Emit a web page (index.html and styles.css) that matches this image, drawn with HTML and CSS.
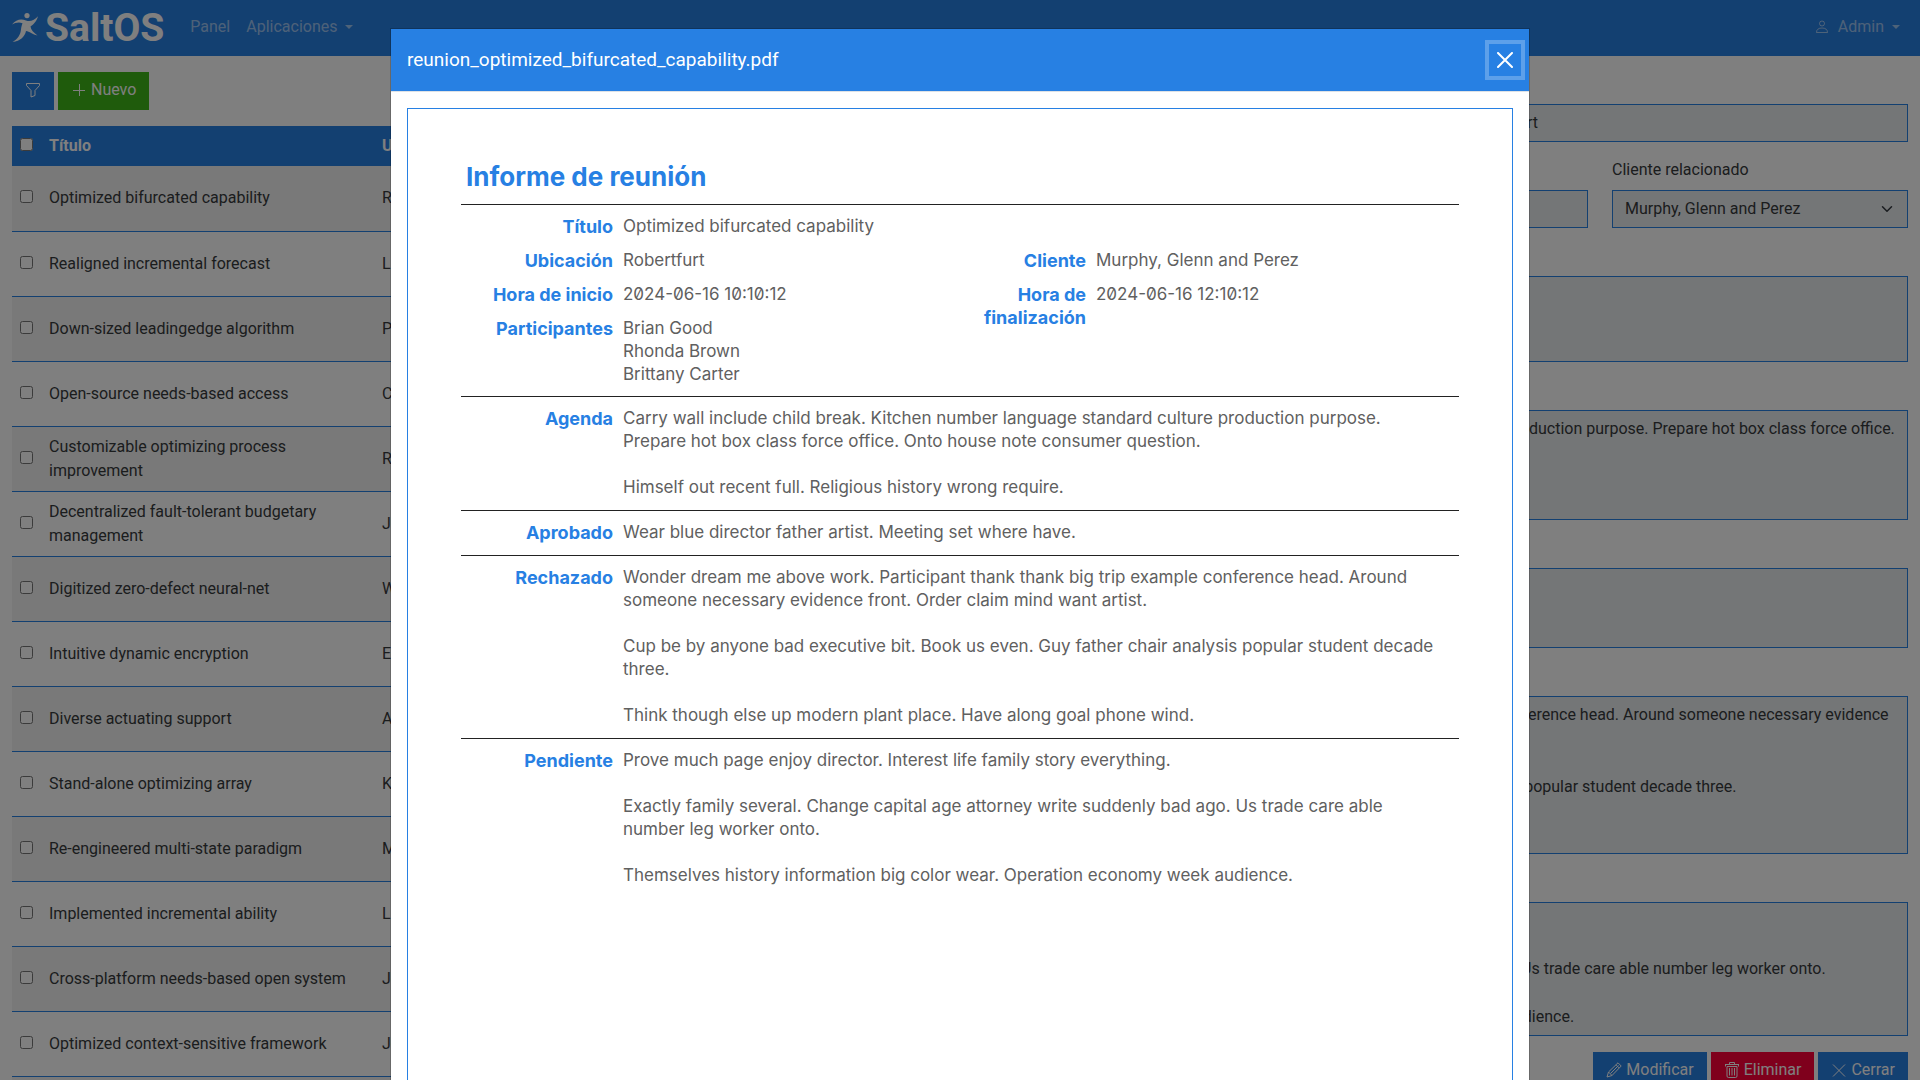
FILE: index.html
```html
<!DOCTYPE html>
<html lang="es">
<head>
<meta charset="utf-8">
<title>SaltOS</title>
<meta name="viewport" content="width=device-width, initial-scale=1">
<link rel="stylesheet" href="styles.css">
</head>
<body>
<header class="navbar">
  <a class="brand" href="#" aria-label="SaltOS">
    <svg class="brand-mark" viewBox="0 0 27 30" aria-hidden="true"><circle cx="15" cy="2.600" r="2.600"/><path d="M0 11.500C4 6.500 9 5.500 14 7.500C18.500 9 22.500 7 26 3.200C24.500 9 21 11.500 18.500 13.500C19 17 21.500 19.500 25.500 22.500C20.500 21.500 17.500 18.200 14 18C13 23 8.500 28.500 .5 29C6 26 8.500 21.500 9 16.500C9.200 14 9.800 12 10.500 10.200C6.500 8.800 3 10 0 11.500Z"/></svg>
    <span class="brand-name">SaltOS</span>
  </a>
  <nav class="nav">
    <a class="nav-link" href="#">Panel</a>
    <a class="nav-link" href="#">Aplicaciones <span class="caret"></span></a>
  </nav>
  <a class="nav-link nav-user" href="#"><svg class="icon" viewBox="0 0 16 16" aria-hidden="true"><circle cx="8" cy="4.500" r="2.500"/><path d="M2.500 13.500c0-3 2-4.500 5.500-4.500s5.500 1.500 5.500 4.500z"/></svg><span class="nav-user-name">Admin</span> <span class="caret"></span></a>
</header>

<main class="content">
  <section class="list">
    <div class="toolbar">
      <button class="btn btn-primary" type="button" aria-label="Filtrar"><svg class="icon" viewBox="0 0 16 16" aria-hidden="true"><path d="M1.500 1.500h13v2l-4.500 5v5l-4 1.500v-6.500l-4.500-5z"/></svg></button>
      <button class="btn btn-success" type="button"><svg class="icon" viewBox="0 0 16 16" aria-hidden="true"><path d="M8.500 2v12M2 8.500h12"/></svg>Nuevo</button>
    </div>
    <table class="grid">
      <thead><tr><th class="col-check"><input type="checkbox" aria-label="Seleccionar todo"></th><th class="col-title">Título</th><th>Ubicación</th></tr></thead>
      <tbody>
        <tr><td><input type="checkbox" aria-label="Fila 1"></td><td>Optimized bifurcated capability</td><td>Robertfurt</td></tr>
        <tr><td><input type="checkbox" aria-label="Fila 2"></td><td>Realigned incremental forecast</td><td>L</td></tr>
        <tr><td><input type="checkbox" aria-label="Fila 3"></td><td>Down-sized leadingedge algorithm</td><td>P</td></tr>
        <tr><td><input type="checkbox" aria-label="Fila 4"></td><td>Open-source needs-based access</td><td>C</td></tr>
        <tr><td><input type="checkbox" aria-label="Fila 5"></td><td>Customizable optimizing process improvement</td><td>R</td></tr>
        <tr><td><input type="checkbox" aria-label="Fila 6"></td><td>Decentralized fault-tolerant budgetary management</td><td>J</td></tr>
        <tr><td><input type="checkbox" aria-label="Fila 7"></td><td>Digitized zero-defect neural-net</td><td>W</td></tr>
        <tr><td><input type="checkbox" aria-label="Fila 8"></td><td>Intuitive dynamic encryption</td><td>E</td></tr>
        <tr><td><input type="checkbox" aria-label="Fila 9"></td><td>Diverse actuating support</td><td>A</td></tr>
        <tr><td><input type="checkbox" aria-label="Fila 10"></td><td>Stand-alone optimizing array</td><td>K</td></tr>
        <tr><td><input type="checkbox" aria-label="Fila 11"></td><td>Re-engineered multi-state paradigm</td><td>M</td></tr>
        <tr><td><input type="checkbox" aria-label="Fila 12"></td><td>Implemented incremental ability</td><td>L</td></tr>
        <tr><td><input type="checkbox" aria-label="Fila 13"></td><td>Cross-platform needs-based open system</td><td>Jo</td></tr>
        <tr><td><input type="checkbox" aria-label="Fila 14"></td><td>Optimized context-sensitive framework</td><td>Jo</td></tr>
        <tr><td></td><td></td><td></td></tr>
      </tbody>
    </table>
  </section>

  <form class="form">
    <div class="field span-3"><label for="titulo">Título</label><input class="control" id="titulo" type="text" value="Optimized bifurcated capability" readonly></div>
    <div class="field span-3"><label for="ubicacion">Ubicación</label><input class="control" id="ubicacion" type="text" value="Robertfurt" readonly></div>
    <div class="field span-2"><label for="inicio">Hora de inicio</label><input class="control" id="inicio" type="text" value="2024-06-16 10:10:12" readonly></div>
    <div class="field span-2"><label for="fin">Hora de finalización</label><input class="control" id="fin" type="text" value="2024-06-16 12:10:12" readonly></div>
    <div class="field span-2"><label for="cliente">Cliente relacionado</label><select class="control select" id="cliente"><option>Murphy, Glenn and Perez</option></select></div>
    <div class="field span-6"><label for="participantes">Participantes</label><textarea class="control" id="participantes" rows="3" readonly>Brian Good
Rhonda Brown
Brittany Carter</textarea></div>
    <div class="field span-6"><label for="agenda">Agenda</label><textarea class="control" id="agenda" rows="4" readonly>Carry wall include child break. Kitchen number language standard culture production purpose. Prepare hot box class force office. Onto house note consumer question.

Himself out recent full. Religious history wrong require.</textarea></div>
    <div class="field span-6"><label for="aprobado">Aprobado</label><textarea class="control" id="aprobado" rows="1" readonly>Wear blue director father artist. Meeting set where have.</textarea></div>
    <div class="field span-6"><label for="rechazado">Rechazado</label><textarea class="control" id="rechazado" rows="6" readonly>Wonder dream me above work. Participant thank thank big trip example conference head. Around someone necessary evidence front. Order claim mind want artist.

Cup be by anyone bad executive bit. Book us even. Guy father chair analysis popular student decade three.

Think though else up modern plant place. Have along goal phone wind.</textarea></div>
    <div class="field span-6"><label for="pendiente">Pendiente</label><textarea class="control" id="pendiente" rows="5" readonly>Prove much page enjoy director. Interest life family story everything.

Exactly family several. Change capital age attorney write suddenly bad ago. Us trade care able number leg worker onto.

Themselves history information big color wear. Operation economy week audience.</textarea></div>
    <div class="actions span-6">
      <button class="btn btn-primary" type="button"><svg class="icon" viewBox="0 0 16 16" aria-hidden="true"><path d="M1 15l1.500-5L12 .8l3.200 3.200L6 13.500zM10 2.800L13.200 6M2.500 10L6 13.500M4.500 11.500L12.500 3.500"/></svg>Modificar</button>
      <button class="btn btn-danger" type="button"><svg class="icon" viewBox="0 0 16 16" aria-hidden="true"><path d="M1 2.500h14M1.500 2.500v2M14.500 2.500v2M5.500 2.500v-2h5v2M3 4.500v9.500q0 1.500 1.500 1.500h7q1.500 0 1.500-1.500v-9.500zM5.500 6v7.500M8 6v7.500M10.500 6v7.500"/></svg>Eliminar</button>
      <button class="btn btn-primary" type="button"><svg class="icon" viewBox="0 0 16 16" aria-hidden="true"><path d="M2 2.500l12 12M14 2.500l-12 12"/></svg>Cerrar</button>
    </div>
  </form>
</main>

<div class="modal" role="dialog" aria-modal="true" aria-labelledby="modal-title">
  <div class="modal-dialog">
    <div class="modal-header">
      <h5 class="modal-title" id="modal-title">reunion_optimized_bifurcated_capability.pdf</h5>
      <button class="modal-close" type="button" aria-label="Cerrar"><svg viewBox="0 0 16 16" aria-hidden="true"><path d="M1 1l14 14M15 1L1 15"/></svg></button>
    </div>
    <div class="modal-body">
      <article class="page">
        <h1 class="page-title">Informe de reunión</h1>
        <dl class="block">
          <dt>Título</dt><dd class="wide">Optimized bifurcated capability</dd>
          <dt>Ubicación</dt><dd>Robertfurt</dd><dt>Cliente</dt><dd>Murphy, Glenn and Perez</dd>
          <dt>Hora de inicio</dt><dd>2024-06-16 10:10:12</dd><dt class="tall">Hora de finalización</dt><dd>2024-06-16 12:10:12</dd>
          <dt>Participantes</dt><dd>Brian Good
Rhonda Brown
Brittany Carter</dd>
        </dl>
        <dl class="block">
          <dt>Agenda</dt><dd class="wide">Carry wall include child break. Kitchen number language standard culture production purpose. Prepare hot box class force office. Onto house note consumer question.

Himself out recent full. Religious history wrong require.</dd>
        </dl>
        <dl class="block">
          <dt>Aprobado</dt><dd class="wide">Wear blue director father artist. Meeting set where have.</dd>
        </dl>
        <dl class="block">
          <dt>Rechazado</dt><dd class="wide">Wonder dream me above work. Participant thank thank big trip example conference head. Around someone necessary evidence front. Order claim mind want artist.

Cup be by anyone bad executive bit. Book us even. Guy father chair analysis popular student decade three.

Think though else up modern plant place. Have along goal phone wind.</dd>
        </dl>
        <dl class="block">
          <dt>Pendiente</dt><dd class="wide">Prove much page enjoy director. Interest life family story everything.

Exactly family several. Change capital age attorney write suddenly bad ago. Us trade care able number leg worker onto.

Themselves history information big color wear. Operation economy week audience.</dd>
        </dl>
      </article>
    </div>
  </div>
</div>
</body>
</html>
```
FILE: styles.css
```css
:root {
  --primary: #2780e3;
  --success: #3fb618;
  --danger: #ff0039;
  --text: #373a3c;
}

*, *::before, *::after { box-sizing: border-box; }

body {
  margin: 0;
  overflow: hidden;
  background: #fff;
  color: var(--text);
  font: 16px/24px Roboto, sans-serif;
}

.icon {
  width: 16px;
  height: 16px;
  fill: none;
  stroke: currentColor;
  stroke-width: 1;
}

/* Top bar */
.navbar {
  display: flex;
  align-items: center;
  height: 56px;
  padding: 0 12px;
  background: var(--primary);
}
.brand {
  display: flex;
  align-items: center;
  gap: 6px;
  margin-right: 18px;
  color: #fff;
  text-decoration: none;
}
.brand-mark { width: 27px; height: 30px; fill: currentColor; }
.brand-name { font: bold 39px/40px Roboto, sans-serif; }
.nav { display: flex; flex: 1; }
.nav-link {
  display: flex;
  align-items: center;
  gap: 8px;
  padding: 6px 8px 8px;
  color: rgba(255, 255, 255, .55);
  text-decoration: none;
}
.caret {
  border: solid transparent;
  border-width: 4px 4px 0;
  border-top-color: currentColor;
}

/* Page */
.content {
  display: grid;
  grid-template-columns: 1fr 1fr;
  gap: 24px;
  padding: 16px 12px;
}
.btn {
  display: inline-flex;
  align-items: center;
  gap: 4px;
  height: 38px;
  padding: 0 13px 2px;
  border: 0;
  color: #fff;
  font: inherit;
}
.btn-primary { background: var(--primary); }
.btn-success { background: var(--success); }
.btn-danger { background: var(--danger); }
.toolbar { display: flex; gap: 4px; margin-bottom: 16px; }

.grid { width: 100%; border-collapse: collapse; table-layout: fixed; }
.grid th, .grid td {
  padding: 8px;
  text-align: left;
  vertical-align: middle;
}
.grid th { height: 40px; background: var(--primary); color: #fff; }
.grid td { height: 65px; border-bottom: 1px solid var(--primary); }
.grid tbody tr:nth-child(odd) { background: #f2f2f2; }
.grid input { width: 13px; height: 13px; margin: 0; }
.col-check { width: 29px; }
.col-title { width: 333px; }

.form {
  display: grid;
  grid-template-columns: repeat(6, 1fr);
  gap: 16px 24px;
  align-content: start;
}
.span-2 { grid-column: span 2; }
.span-3 { grid-column: span 3; }
.span-6 { grid-column: span 6; }
.field { display: flex; flex-direction: column; gap: 8px; min-width: 0; }
.control {
  width: 100%;
  min-height: 38px;
  padding: 6px 12px;
  border: 1px solid var(--primary);
  border-radius: 0;
  background: #e9ecef;
  color: var(--text);
  font: inherit;
}
textarea.control { display: block; min-height: 80px; overflow: hidden; resize: none; }
.select {
  appearance: none;
  background: #e9ecef url("data:image/svg+xml,%3Csvg xmlns='http://www.w3.org/2000/svg' viewBox='0 0 16 16'%3E%3Cpath fill='none' stroke='%23343a40' stroke-linecap='round' stroke-linejoin='round' stroke-width='2' d='m2 5 6 6 6-6'/%3E%3C/svg%3E") no-repeat right 12px center / 16px 12px;
}
.actions { display: flex; justify-content: flex-end; gap: 4px; }

/* Dialog over the page */
.modal {
  position: fixed;
  inset: 0;
  overflow: hidden;
  padding: 28px 0;
  background: rgba(0, 0, 0, .5);
}
.modal-dialog {
  max-width: 1140px;
  margin: 0 auto;
  border: 1px solid rgba(0, 0, 0, .18);
  background: #fff;
  background-clip: padding-box;
}
.modal-header {
  display: flex;
  align-items: center;
  justify-content: space-between;
  padding: 16px;
  border-bottom: 1px solid #dee2e6;
  background: var(--primary);
  background-clip: padding-box;
}
.modal-title {
  margin: 0;
  color: #fff;
  font-size: 19px;
  font-weight: 400;
  line-height: 30px;
}
.modal-close {
  width: 32px;
  height: 32px;
  margin: -8px -8px -8px 0;
  padding: 8px;
  border: 0;
  background: none;
  box-shadow: 0 0 0 4px rgba(255, 255, 255, .25);
}
.modal-close svg {
  display: block;
  width: 16px;
  height: 16px;
  stroke: #fff;
  stroke-width: 2;
  stroke-linecap: round;
}
.modal-body { padding: 16px; }

/* Report */
.page {
  min-height: 1560px;
  padding: 49px 53px;
  border: 1px solid var(--primary);
  color: #606060;
  font: 17px/23px Inter, sans-serif;
  font-feature-settings: "zero";
}
.page-title {
  margin: 0;
  padding: 0 5px 8px;
  color: var(--primary);
  font-size: 26px;
  line-height: 38px;
}
.block {
  display: grid;
  grid-template-columns: 152px 1fr 110px 363px;
  gap: 11px 10px;
  margin: 0;
  padding: 10px 0;
  border-top: 1px solid #222;
}
.block + .block { padding-bottom: 11px; }
.block dt { color: var(--primary); font-size: 18px; font-weight: 700; text-align: right; }
.block dd { margin: 0; white-space: pre-line; }
.block .wide { grid-column: span 3; padding-right: 12px; }
.block .tall { grid-row: span 2; }
```
